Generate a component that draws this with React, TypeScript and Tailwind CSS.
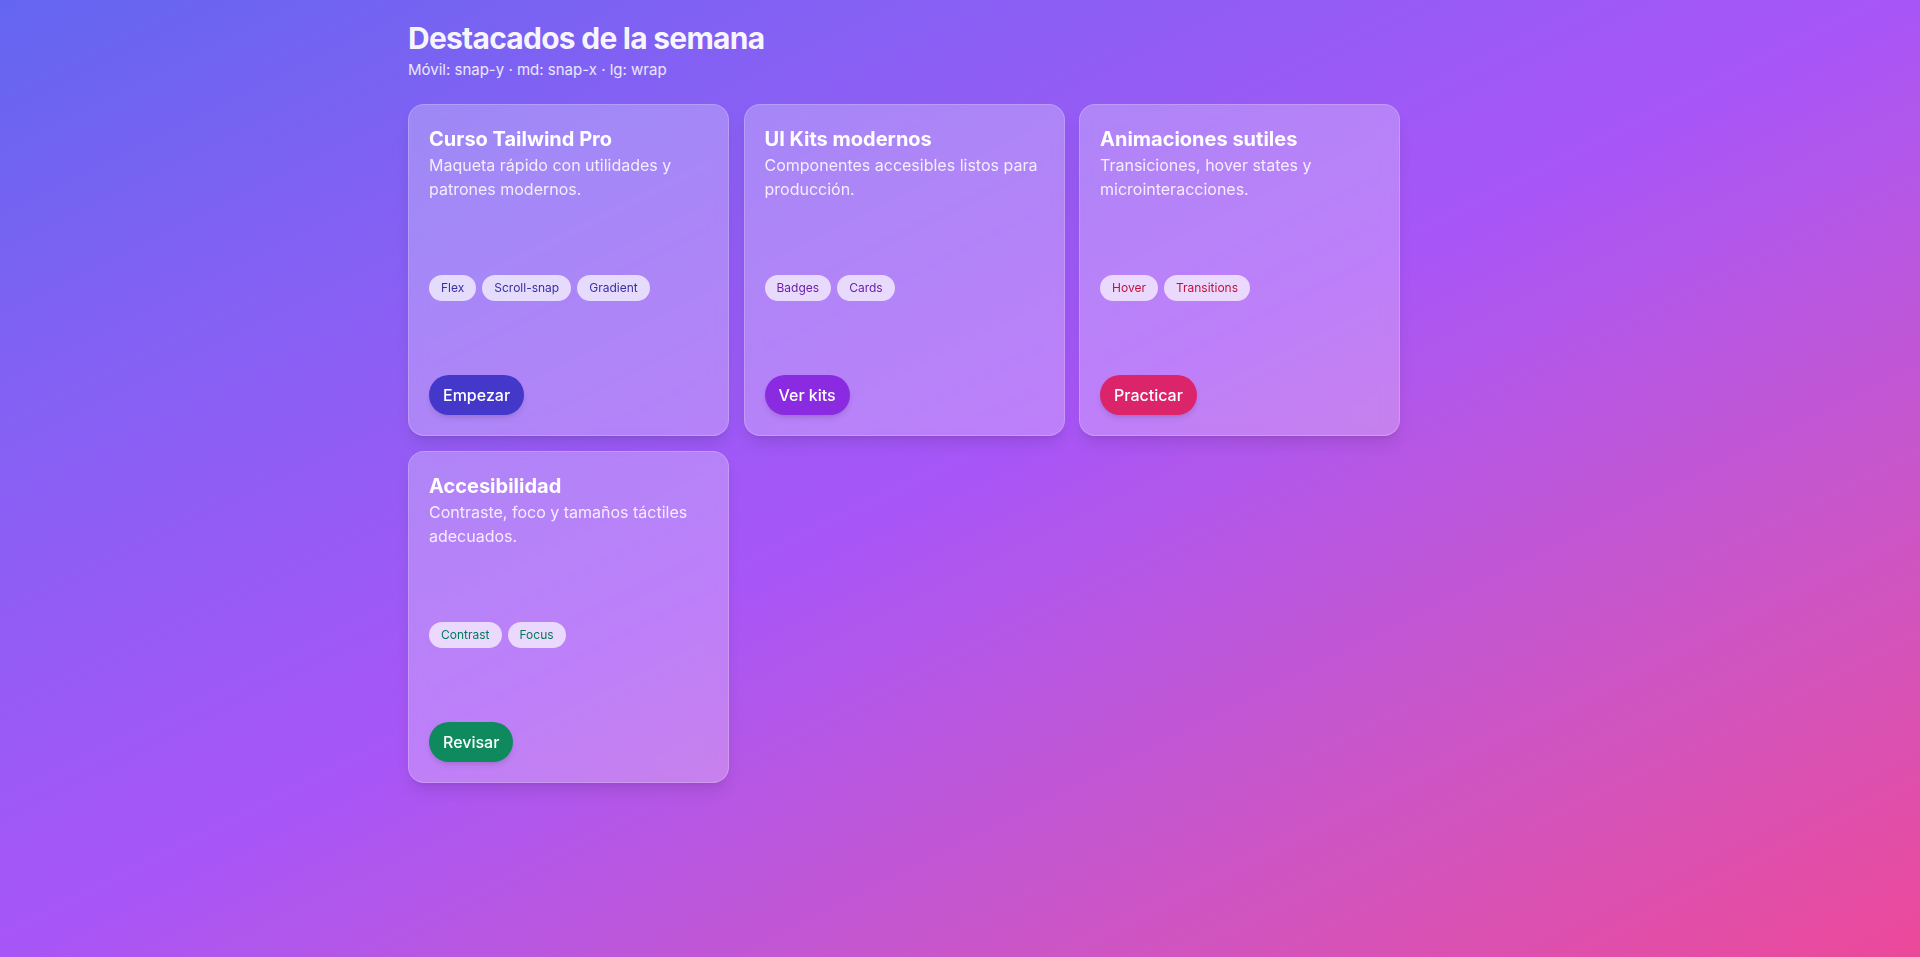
type Card = {
  title: string;
  text: string;
  tags: string[];
  tagColor: string;
  cta: string;
  btn: string;
};

const cards: Card[] = [
  {
    title: 'Curso Tailwind Pro',
    text: 'Maqueta rápido con utilidades y patrones modernos.',
    tags: ['Flex', 'Scroll-snap', 'Gradient'],
    tagColor: 'text-[#3730a3]',
    cta: 'Empezar',
    btn: 'bg-[#4338ca]',
  },
  {
    title: 'UI Kits modernos',
    text: 'Componentes accesibles listos para producción.',
    tags: ['Badges', 'Cards'],
    tagColor: 'text-[#6b21a8]',
    cta: 'Ver kits',
    btn: 'bg-[#8a2be2]',
  },
  {
    title: 'Animaciones sutiles',
    text: 'Transiciones, hover states y microinteracciones.',
    tags: ['Hover', 'Transitions'],
    tagColor: 'text-[#be123c]',
    cta: 'Practicar',
    btn: 'bg-[#db2469]',
  },
  {
    title: 'Accesibilidad',
    text: 'Contraste, foco y tamaños táctiles adecuados.',
    tags: ['Contrast', 'Focus'],
    tagColor: 'text-[#047857]',
    cta: 'Revisar',
    btn: 'bg-[#0f8a5f]',
  },
];

export default function App() {
  return (
    <div className="min-h-screen bg-gradient-to-br from-[#6366f1] via-[#a855f7] to-[#ec4899] font-['Inter',sans-serif] text-white">
      <div className="max-w-6xl mx-auto px-6 pt-5 pb-10">
        <header className="mb-6">
          <h1 className="text-3xl font-bold tracking-tight text-white/95">Destacados de la semana</h1>
          <p className="mt-1 text-[15px] leading-5 text-white/85">Móvil: snap-y · md: snap-x · lg: wrap</p>
        </header>

        <div className="flex flex-wrap gap-[14.5px]">
          {cards.map(card => (
            <div
              key={card.title}
              className="w-[321px] h-[332px] flex flex-col justify-between p-5 rounded-2xl bg-white/25 border border-white/20 shadow-lg shadow-black/10 backdrop-blur"
            >
              <div>
                <h2 className="text-xl font-bold">{card.title}</h2>
                <p className="text-base leading-6 text-white/85">{card.text}</p>
              </div>
              <div className="flex gap-1.5">
                {card.tags.map(tag => (
                  <span
                    key={tag}
                    className={`px-3 py-[5px] text-xs leading-4 rounded-full bg-white/70 ${card.tagColor}`}
                  >
                    {tag}
                  </span>
                ))}
              </div>
              <div>
                <button
                  className={`px-3.5 py-2 rounded-full text-base font-medium text-white shadow-md ${card.btn}`}
                >
                  {card.cta}
                </button>
              </div>
            </div>
          ))}
        </div>
      </div>
    </div>
  );
}
